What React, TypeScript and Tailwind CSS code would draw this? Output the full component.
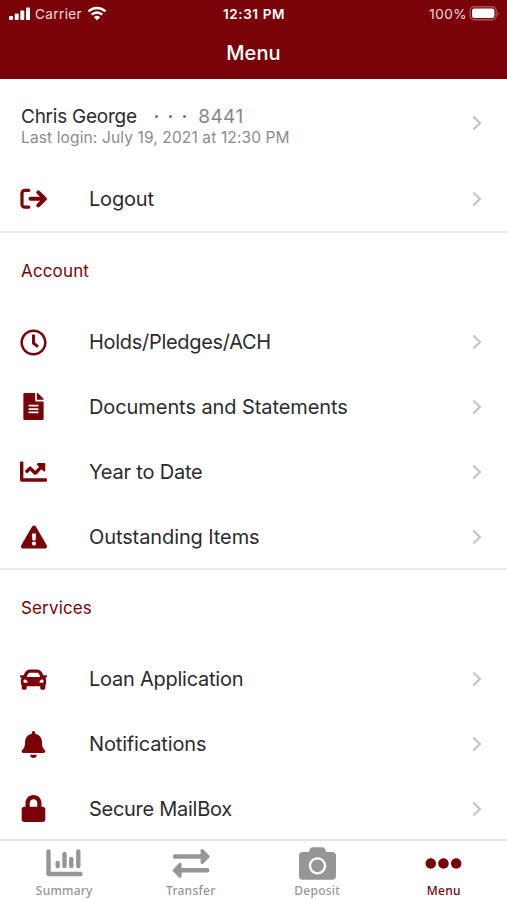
import type { ReactNode } from "react";
import {
  FaBell,
  FaCamera,
  FaCar,
  FaChartLine,
  FaEllipsisH,
  FaExclamationTriangle,
  FaFileAlt,
  FaLock,
  FaRegClock,
} from "react-icons/fa";

function LogoutIcon() {
  return (
    <svg width="28" height="22" viewBox="0 0 28 22" fill="none">
      <path d="M8.8 2.300H4.800A2.800 2.800 0 0 0 2 5.100v11.300a2.800 2.800 0 0 0 2.800 2.800h4" stroke="currentColor" strokeWidth="3.200" strokeLinecap="round" />
      <path d="M10.500 10.800h14M18.300 4.300l6.600 6.500-6.600 6.500" stroke="currentColor" strokeWidth="4" strokeLinecap="round" strokeLinejoin="round" />
    </svg>
  );
}

function SummaryIcon() {
  return (
    <svg width="38" height="30" viewBox="0 0 38 30" fill="none" stroke="currentColor">
      <path d="M3.500 3.500v22.500h32" strokeWidth="4.400" strokeLinejoin="round" strokeLinecap="round" />
      <path d="M12.700 15v3M19.500 6v12M26.300 11v7M33.300 3.500V18" strokeWidth="4.400" strokeLinecap="round" />
    </svg>
  );
}

function TransferIcon() {
  return (
    <svg width="38" height="30" viewBox="0 0 38 30" fill="currentColor">
      <path d="M2.600 6.300h26V2.700c0-1.800 1.600-2.300 2.800-1.100l5.600 5.700c.8.8.8 1.600 0 2.400l-5.600 5.700c-1.200 1.100-2.800.6-2.800-1.200v-3.500h-26C.3 10.700.3 6.300 2.600 6.300z" />
      <path d="M35.600 20.100h-26v-3.500c0-1.800-1.600-2.300-2.800-1.100l-5.600 5.700c-.8.8-.8 1.600 0 2.400l5.600 5.700c1.200 1.100 2.800.6 2.800-1.200v-3.600h26c2.300 0 2.300-4.400 0-4.400z" />
    </svg>
  );
}

function Chevron() {
  return (
    <svg className="shrink-0" width="12" height="18" viewBox="0 0 12 18" fill="none">
      <path d="M2.200 2.500 9 9l-6.800 6.500" stroke="#c2c2c4" strokeWidth="2" />
    </svg>
  );
}

function MenuRow({ icon, label, tracking = "tracking-[-0.2px]" }: { icon: ReactNode; label: string; tracking?: string }) {
  return (
    <button className="flex h-[64.8px] w-full items-center pt-px pr-[24px] pl-[19.500px] text-left">
      <span className="flex w-7 shrink-0 justify-center text-[#7a0209]">{icon}</span>
      <span className={`ml-[41.500px] flex-1 text-[20px] text-[#2b2b2d] ${tracking}`}>{label}</span>
      <Chevron />
    </button>
  );
}

function Section({ title, children }: { title: string; children: ReactNode }) {
  return (
    <section className="border-t-2 border-[#ebebec]">
      <h2 className="flex h-[76px] items-center pl-[21px] text-[17px] tracking-[0.15px] text-[#7a0209]">{title}</h2>
      {children}
    </section>
  );
}

function Tab({ icon, label, active }: { icon: ReactNode; label: string; active?: boolean }) {
  return (
    <button className={`flex flex-1 flex-col items-center pt-[6px] ${active ? "text-[#7a0209]" : "text-[#969696]"}`}>
      <span className="flex h-[32px] items-center">{icon}</span>
      <span className="mt-1 font-['Noto_Sans',sans-serif] text-[12px] leading-4 font-medium tracking-[0.25px]">{label}</span>
    </button>
  );
}

function StatusBar() {
  return (
    <div className="grid h-[27px] grid-cols-3 items-center px-2 text-[13.500px]">
      <div className="flex items-center gap-1">
        <svg width="23" height="14" viewBox="0 0 23 14" fill="currentColor">
          <rect x="1" y="9" width="4" height="4" rx="1" />
          <rect x="6.700" y="6.500" width="4" height="6.500" rx="1" />
          <rect x="12.300" y="3.500" width="4" height="9.500" rx="1" />
          <rect x="18" y="0.500" width="4" height="12.500" rx="1" />
        </svg>
        <span className="pt-px tracking-[0.4px] opacity-85">Carrier</span>
        <svg className="ml-px" width="20" height="15" viewBox="0 0 20 15" fill="none" stroke="currentColor">
          <path d="M1.500 5.400a12.200 12.200 0 0 1 17 0" strokeWidth="2.500" />
          <path d="M4.700 8.700a7.600 7.600 0 0 1 10.600 0" strokeWidth="2.500" />
          <path d="M10 14.300 6.900 11.200a4.500 4.500 0 0 1 6.200 0z" fill="currentColor" stroke="none" />
        </svg>
      </div>
      <div className="pt-px pl-px text-center font-semibold tracking-[0.6px]">12:31 PM</div>
      <div className="flex items-center justify-end gap-[2px]">
        <span className="pt-px tracking-[0.5px] opacity-85">100%</span>
        <svg width="30" height="15" viewBox="0 0 30 15" fill="none">
          <rect x="1.200" y="0.800" width="26" height="13" rx="4" stroke="#a8535a" strokeWidth="1.400" />
          <rect x="3" y="2.600" width="22.400" height="9.400" rx="2.200" fill="white" />
          <path d="M28.600 5v5c1.600-.8 1.600-4.200 0-5z" fill="#a8535a" />
        </svg>
      </div>
    </div>
  );
}

export default function App() {
  return (
    <div className="flex h-[900px] w-[507px] flex-col overflow-hidden bg-white font-[Inter,sans-serif]">
      <header className="h-[79px] shrink-0 bg-[#7a0209] text-white">
        <StatusBar />
        <h1 className="flex h-[51px] items-center justify-center text-[20px] font-medium tracking-[0.1px]">Menu</h1>
      </header>

      <main className="min-h-0 flex-1 overflow-hidden">
        <button className="flex h-[87.500px] w-full items-center pr-[24px] pl-[21px] text-left">
          <div className="flex-1 pt-[6.500px]">
            <div className="flex items-center text-[19px] leading-[23px] text-[#2b2b2d]">
              <span className="tracking-[-0.25px]">Chris George</span>
              <span className="ml-[18px] flex gap-[11px]">
                <i className="size-[3px] rounded-full bg-[#6f6f72]" />
                <i className="size-[3px] rounded-full bg-[#6f6f72]" />
                <i className="size-[3px] rounded-full bg-[#6f6f72]" />
              </span>
              <span className="ml-[12.500px] tracking-[0.4px] text-[#87878a]">8441</span>
            </div>
            <div className="text-[15.500px] leading-5 tracking-[0.13px] text-[#8b8b8e]">Last login: July 19, 2021 at 12:30 PM</div>
          </div>
          <Chevron />
        </button>
        <MenuRow icon={<LogoutIcon />} label="Logout" />

        <Section title="Account">
          <MenuRow icon={<FaRegClock size={27} />} label="Holds/Pledges/ACH" tracking="tracking-[-0.3px]" />
          <MenuRow icon={<FaFileAlt size={27} />} label="Documents and Statements" tracking="tracking-[-0.08px]" />
          <MenuRow icon={<FaChartLine size={27} />} label="Year to Date" />
          <MenuRow icon={<FaExclamationTriangle size={26} />} label="Outstanding Items" tracking="tracking-[-0.1px]" />
        </Section>

        <Section title="Services">
          <MenuRow icon={<FaCar size={27} />} label="Loan Application" tracking="tracking-[-0.25px]" />
          <MenuRow icon={<FaBell size={27} />} label="Notifications" tracking="tracking-[-0.15px]" />
          <MenuRow icon={<FaLock size={27} />} label="Secure MailBox" tracking="tracking-[-0.28px]" />
        </Section>
      </main>

      <nav className="flex h-[61px] shrink-0 border-t-2 border-[#e6e6e7] bg-white pl-px">
        <Tab icon={<SummaryIcon />} label="Summary" />
        <Tab icon={<TransferIcon />} label="Transfer" />
        <Tab icon={<FaCamera size={37} />} label="Deposit" />
        <Tab icon={<FaEllipsisH size={37} />} label="Menu" active />
      </nav>
    </div>
  );
}
